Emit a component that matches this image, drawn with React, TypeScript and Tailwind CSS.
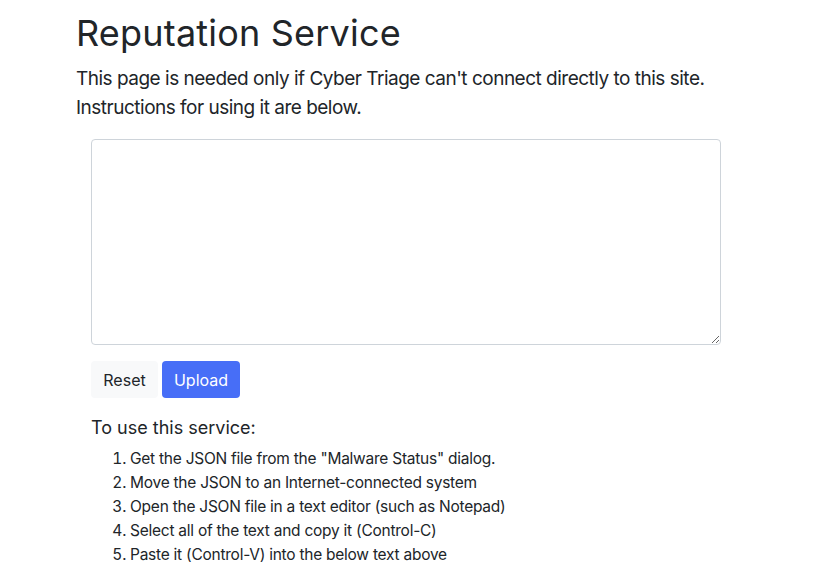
import React from "react";

export default function App() {
  return (
    <div className="min-h-[585px] w-[833px] bg-white text-[#212529]" style={{ fontFamily: "Inter, 'Noto Sans', sans-serif" }}>
      <div className="pl-[76px] pt-[13px]">
        <h1 className="text-[36px] leading-[41px] font-normal tracking-[0.2px]">Reputation Service</h1>
        <p className="mt-[10px] text-[19px] leading-[29px] tracking-[-0.5px]">This page is needed only if Cyber Triage can't connect directly to this site.</p>
        <p className="text-[19px] leading-[29px] tracking-[-0.5px]">Instructions for using it are below.</p>
        <div className="pl-[15px] pt-[17px]">
          <textarea className="block h-[206px] w-[630px] rounded-[4px] border border-[#ced4da] bg-white outline-none" />
          <div className="mt-[16px] flex gap-[4px]">
            <button className="h-[37px] w-[67px] rounded-[4px] bg-[#f8f9fa] text-[16px] text-[#212529]">Reset</button>
            <button className="h-[37px] w-[78px] rounded-[4px] bg-[#476ef7] text-[16px] text-white">Upload</button>
          </div>
          <div className="mt-[17px] text-[18px] leading-[26px]">To use this service:</div>
          <ol className="mt-[6px] list-decimal pl-[39px] text-[15.5px] leading-[24px] tracking-[-0.25px]">
            <li>Get the JSON file from the "Malware Status" dialog.</li>
            <li>Move the JSON to an Internet-connected system</li>
            <li>Open the JSON file in a text editor (such as Notepad)</li>
            <li>Select all of the text and copy it (Control-C)</li>
            <li>Paste it (Control-V) into the below text above</li>
          </ol>
        </div>
      </div>
    </div>
  );
}
